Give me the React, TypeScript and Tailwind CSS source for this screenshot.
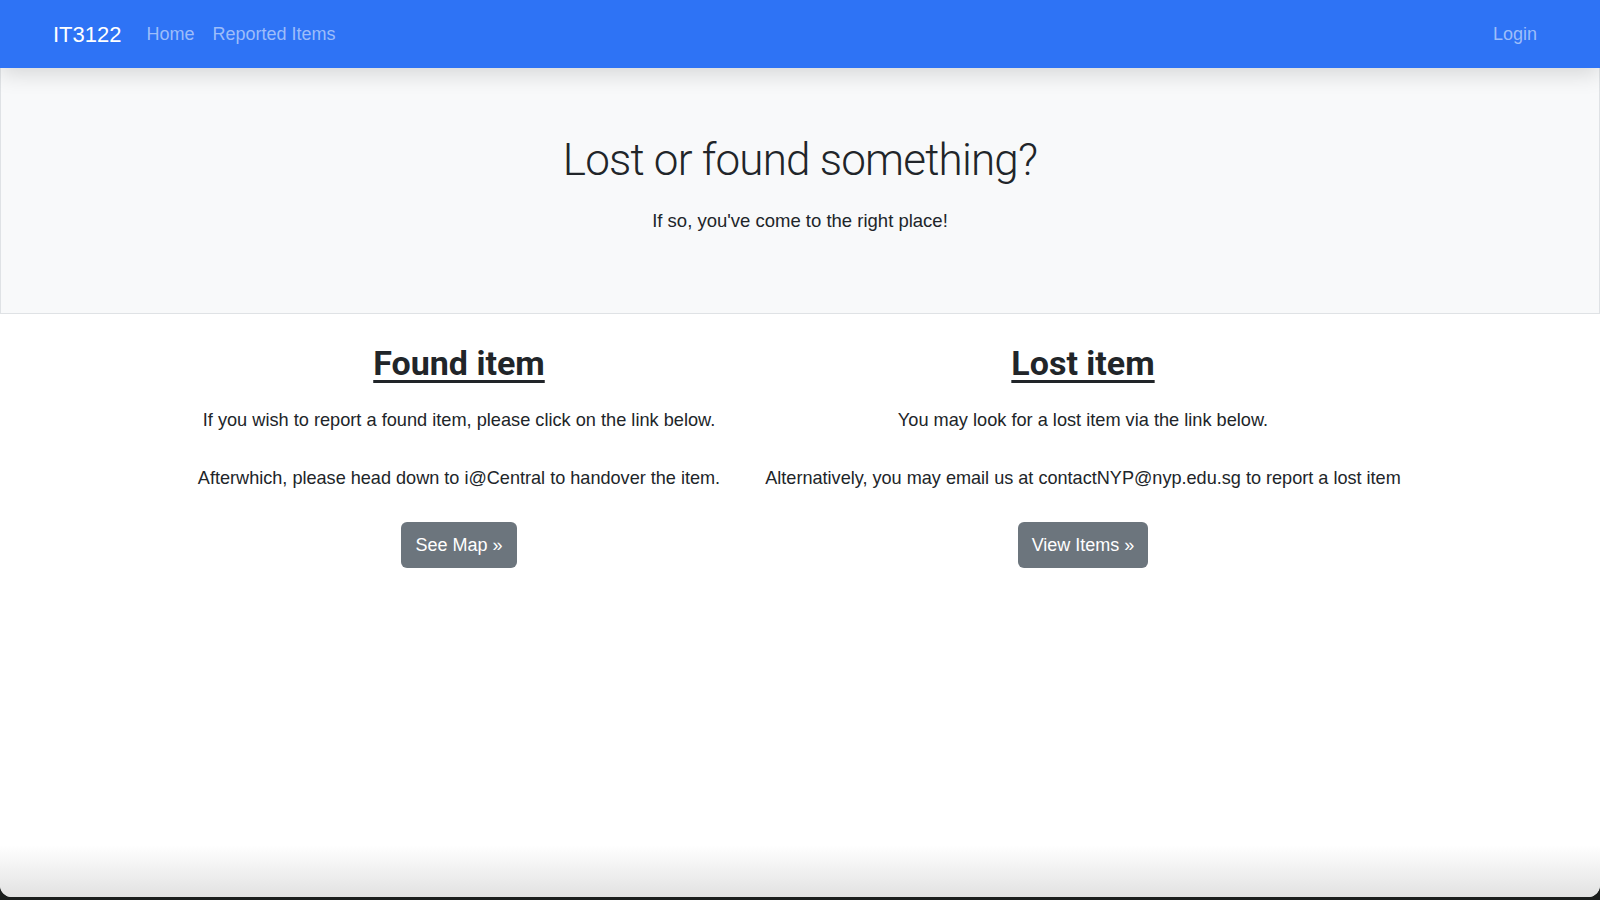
import React from "react";

const body = { fontFamily: '"Liberation Sans", Arial, sans-serif' };
const display = { fontFamily: 'Roboto, "Liberation Sans", sans-serif' };

function NavBar() {
  return (
    <nav className="relative z-10 flex h-[68px] items-center bg-[#2e73f5] pl-[53px] pr-[63px] shadow-[0_6px_22px_rgba(0,0,0,0.14)]">
      <span className="mr-[25px] text-[22px] text-white">IT3122</span>
      <div className="flex items-center gap-[18px] pt-[1px] text-[18px] text-[#9dbdfa]">
        <span>Home</span>
        <span>Reported Items</span>
      </div>
      <span className="ml-auto pt-[1px] text-[18px] text-[#9dbdfa]">Login</span>
    </nav>
  );
}

function Column({
  title,
  lines,
  button,
}: {
  title: string;
  lines: string[];
  button: string;
}) {
  return (
    <div className="flex flex-col items-center">
      <h2
        className="mt-[29px] text-[34px] font-bold leading-[41px] text-[#212529] underline decoration-[3px] underline-offset-[5px]"
        style={display}
      >
        {title}
      </h2>
      <p className="mt-[23px] whitespace-nowrap text-[18.2px] leading-[27px] text-[#212529]">
        {lines[0]}
      </p>
      <p className="mt-[31px] whitespace-nowrap text-[18.1px] leading-[27px] text-[#212529]">
        {lines[1]}
      </p>
      <button className="mt-[30px] flex h-[46px] items-center rounded-[6px] bg-[#6c757d] px-[14px] text-[18px] text-white">
        {button}
      </button>
    </div>
  );
}

export default function App() {
  return (
    <div className="h-screen w-full bg-[#1b1e1d]" style={body}>
      <div className="flex h-[897px] flex-col overflow-hidden rounded-b-[12px] bg-white">
        <NavBar />

        {/* jumbotron */}
        <section className="flex flex-col items-center border-x border-b border-[#dfe2e5] bg-[#f8f9fa] pb-[79px] pt-[66px]">
          <h1
            className="text-[44px] font-light leading-[53px] tracking-[-0.8px] text-[#212529]"
            style={display}
          >
            Lost or found something?
          </h1>
          <p className="mt-[20px] text-[18.5px] leading-[27px] text-[#212529]">
            If so, you've come to the right place!
          </p>
        </section>

        <div className="grid grid-cols-[624px_624px] pl-[147px]">
          <Column
            title="Found item"
            lines={[
              "If you wish to report a found item, please click on the link below.",
              "Afterwhich, please head down to i@Central to handover the item.",
            ]}
            button="See Map »"
          />
          <Column
            title="Lost item"
            lines={[
              "You may look for a lost item via the link below.",
              "Alternatively, you may email us at contactNYP@nyp.edu.sg to report a lost item",
            ]}
            button="View Items »"
          />
        </div>

        <div className="flex-1" />
        <div className="h-[52px] bg-gradient-to-b from-white to-[#e2e2e2]" />
      </div>
    </div>
  );
}
